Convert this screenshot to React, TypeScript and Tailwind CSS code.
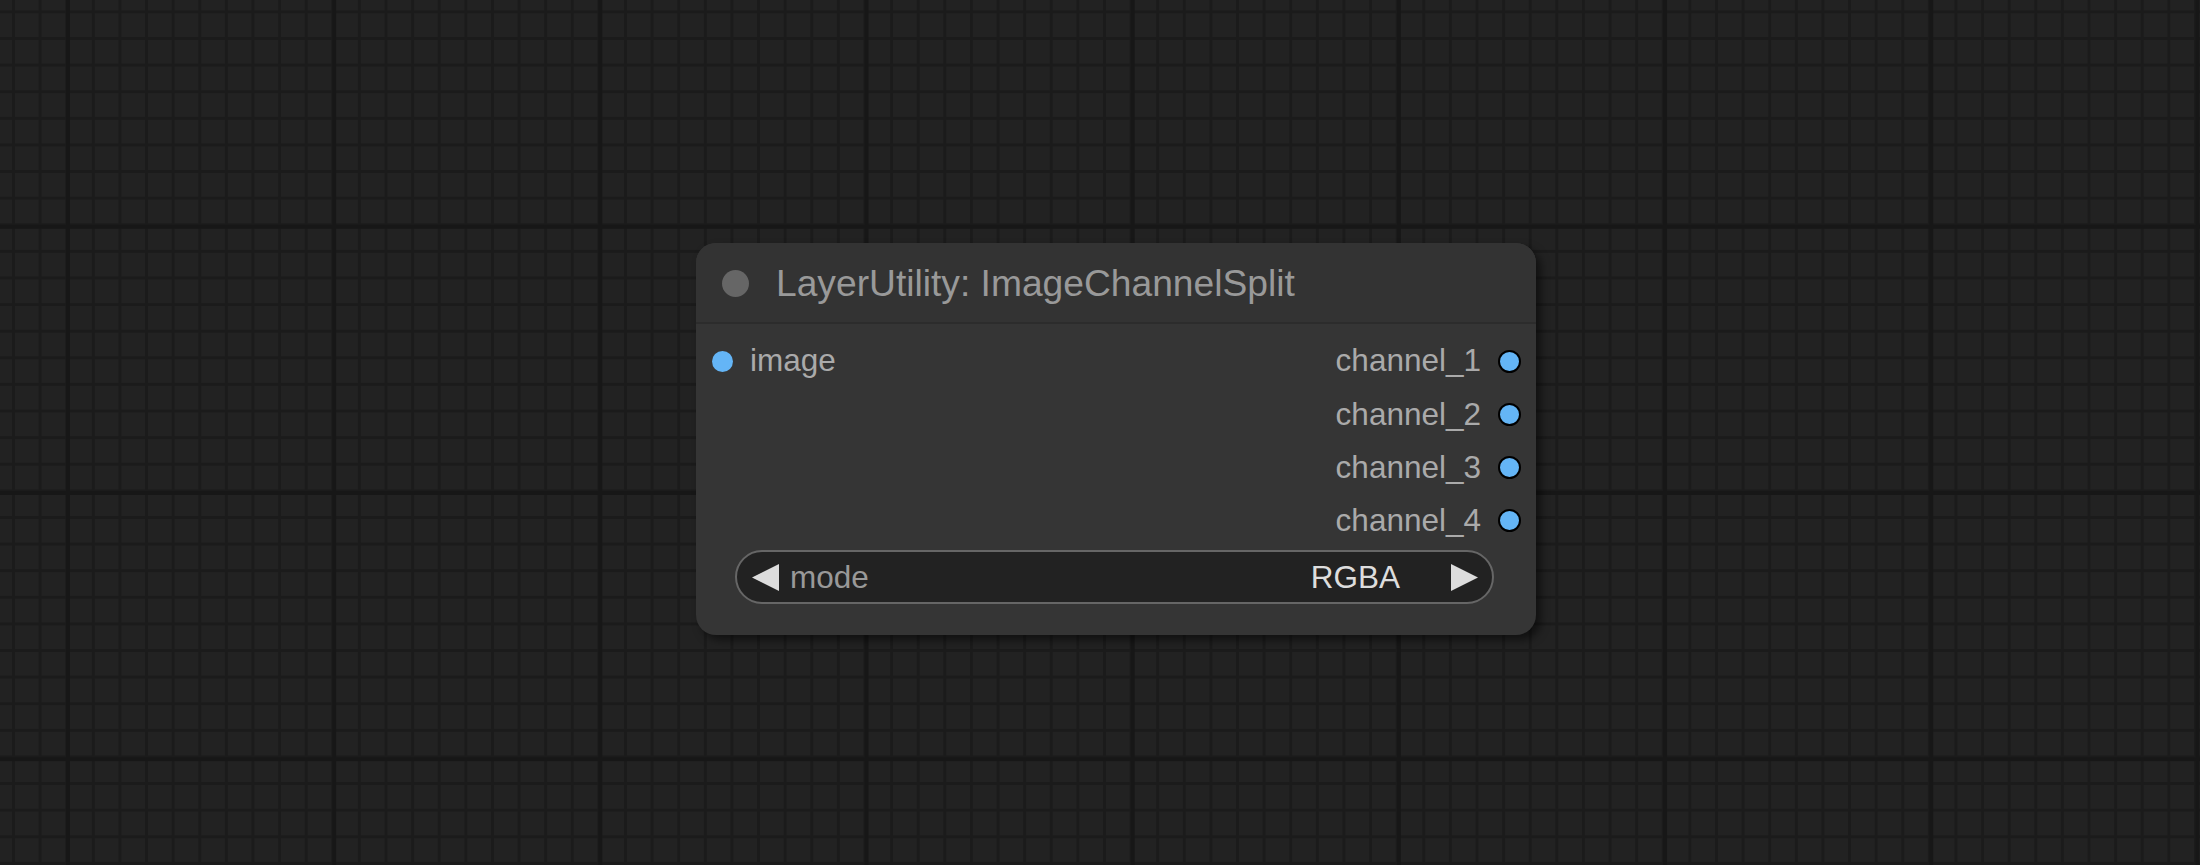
import React from "react";

const font = "font-['Liberation_Sans',Arial,sans-serif]";

function OutputRow({ label }: { label: string }) {
  return (
    <div className="flex h-[53.2px] items-center justify-end pr-[15px]">
      <span className="text-[31.5px] leading-none text-[#aaaaaa]">{label}</span>
      <span className="ml-[17px] box-border h-[23px] w-[23px] rounded-full border-2 border-black bg-[#64b5f6]" />
    </div>
  );
}

export default function App() {
  return (
    <div
      className={`relative h-[865px] w-[2200px] overflow-hidden bg-[#222222] ${font} [background-image:linear-gradient(to_right,#171717_4px,transparent_4px),linear-gradient(to_bottom,#171717_4px,transparent_4px),linear-gradient(to_right,#1b1b1b_2.5px,transparent_2.5px),linear-gradient(to_bottom,#1b1b1b_2.5px,transparent_2.5px)] [background-size:266.2px_266.2px,266.2px_266.2px,26.62px_26.62px,26.62px_26.62px] [background-position:66px_0px,0px_224.8px,12px_0px,0px_10.4px]`}
    >
      <div className="absolute left-[696px] top-[243px] flex h-[392px] w-[840px] flex-col rounded-[20px] bg-[#353535] shadow-[5px_5px_8px_rgba(0,0,0,0.5)]">
        <div className="flex h-[79px] items-center rounded-t-[20px] bg-[#333333] pl-[26px] pt-[2px]">
          <span className="h-[27px] w-[27px] rounded-full bg-[#666666]" />
          <span className="ml-[27px] text-[37.2px] leading-none text-[#999999]">
            LayerUtility: ImageChannelSplit
          </span>
        </div>
        <div className="h-[2px] bg-[#2c2c2c]" />
        <div className="relative pt-[10.5px]">
          <div className="absolute left-0 top-[10.5px] flex h-[53.2px] items-center pl-[16px]">
            <span className="h-[21px] w-[21px] rounded-full bg-[#64b5f6]" />
            <span className="ml-[17px] text-[31.5px] leading-none text-[#aaaaaa]">image</span>
          </div>
          <OutputRow label="channel_1" />
          <OutputRow label="channel_2" />
          <OutputRow label="channel_3" />
          <OutputRow label="channel_4" />
        </div>
        <div className="ml-[39px] mt-[3px] box-border flex h-[54px] w-[759px] items-center rounded-full border-2 border-[#666666] bg-[#222222] pl-[15px] pr-[14px]">
          <svg width="27" height="27" viewBox="0 0 27 27" className="shrink-0">
            <polygon points="0,13.5 27,0 27,27" fill="#dddddd" />
          </svg>
          <span className="ml-[11px] text-[31.5px] leading-none text-[#999999]">mode</span>
          <span className="flex-1" />
          <span className="text-[31.5px] leading-none text-[#dddddd]">RGBA</span>
          <svg width="27" height="27" viewBox="0 0 27 27" className="ml-[51px] shrink-0">
            <polygon points="0,0 27,13.5 0,27" fill="#dddddd" />
          </svg>
        </div>
      </div>
    </div>
  );
}
